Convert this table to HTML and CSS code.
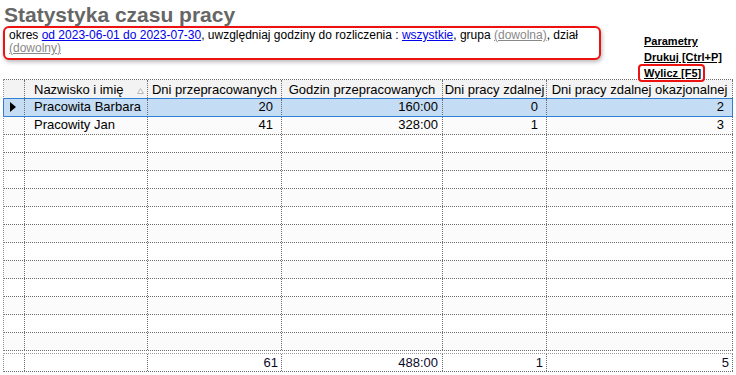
FILE: index.html
```html
<!DOCTYPE html>
<html lang="pl">
<head>
<meta charset="utf-8">
<title>Statystyka czasu pracy</title>
<link rel="stylesheet" href="styles.css">
</head>
<body>
<div class="page">
  <div class="top">
    <div class="left">
      <h1 class="title">Statystyka czasu pracy</h1>
      <div class="filter">okres <a class="link" href="#">od 2023-06-01 do 2023-07-30</a>, uwzględniaj godziny do rozliczenia : <a class="link" href="#">wszystkie</a>, grupa <a class="muted" href="#">(dowolna)</a>, dział <a class="muted" href="#">(dowolny)</a></div>
    </div>
    <div class="actions">
      <a class="action" href="#">Parametry</a>
      <a class="action" href="#">Drukuj [Ctrl+P]</a>
      <a class="action boxed" href="#">Wylicz [F5]</a>
    </div>
  </div>

  <div class="grid">
    <div class="row head">
      <div class="cell c-ind"></div>
      <div class="cell c-name name-head"><span>Nazwisko i imię</span><svg class="sort" width="7" height="6" viewBox="0 0 7 6"><polygon points="3.5,0.5 6.5,5.5 0.5,5.5" fill="#f4f4f4" stroke="#b8b8b8" stroke-width="1"/></svg></div>
      <div class="cell c-days">Dni przepracowanych</div>
      <div class="cell c-hours">Godzin przepracowanych</div>
      <div class="cell c-remote">Dni pracy zdalnej</div>
      <div class="cell c-occ">Dni pracy zdalnej okazjonalnej</div>
    </div>
    <div class="row body sel">
      <div class="cell c-ind"><svg class="ptr" width="6" height="10" viewBox="0 0 6 10"><polygon points="0,0 6,5 0,10" fill="#000"/></svg></div>
      <div class="cell c-name">Pracowita Barbara</div>
      <div class="cell c-days num">20</div>
      <div class="cell c-hours num hrs">160:00</div>
      <div class="cell c-remote num">0</div>
      <div class="cell c-occ num">2</div>
    </div>
    <div class="row body alt">
      <div class="cell c-ind"></div>
      <div class="cell c-name">Pracowity Jan</div>
      <div class="cell c-days num">41</div>
      <div class="cell c-hours num hrs">328:00</div>
      <div class="cell c-remote num">1</div>
      <div class="cell c-occ num">3</div>
    </div>
    <div class="row body"><div class="cell c-ind"></div><div class="cell c-name"></div><div class="cell c-days"></div><div class="cell c-hours"></div><div class="cell c-remote"></div><div class="cell c-occ"></div></div>
    <div class="row body alt"><div class="cell c-ind"></div><div class="cell c-name"></div><div class="cell c-days"></div><div class="cell c-hours"></div><div class="cell c-remote"></div><div class="cell c-occ"></div></div>
    <div class="row body"><div class="cell c-ind"></div><div class="cell c-name"></div><div class="cell c-days"></div><div class="cell c-hours"></div><div class="cell c-remote"></div><div class="cell c-occ"></div></div>
    <div class="row body alt"><div class="cell c-ind"></div><div class="cell c-name"></div><div class="cell c-days"></div><div class="cell c-hours"></div><div class="cell c-remote"></div><div class="cell c-occ"></div></div>
    <div class="row body"><div class="cell c-ind"></div><div class="cell c-name"></div><div class="cell c-days"></div><div class="cell c-hours"></div><div class="cell c-remote"></div><div class="cell c-occ"></div></div>
    <div class="row body alt"><div class="cell c-ind"></div><div class="cell c-name"></div><div class="cell c-days"></div><div class="cell c-hours"></div><div class="cell c-remote"></div><div class="cell c-occ"></div></div>
    <div class="row body"><div class="cell c-ind"></div><div class="cell c-name"></div><div class="cell c-days"></div><div class="cell c-hours"></div><div class="cell c-remote"></div><div class="cell c-occ"></div></div>
    <div class="row body alt"><div class="cell c-ind"></div><div class="cell c-name"></div><div class="cell c-days"></div><div class="cell c-hours"></div><div class="cell c-remote"></div><div class="cell c-occ"></div></div>
    <div class="row body"><div class="cell c-ind"></div><div class="cell c-name"></div><div class="cell c-days"></div><div class="cell c-hours"></div><div class="cell c-remote"></div><div class="cell c-occ"></div></div>
    <div class="row body alt"><div class="cell c-ind"></div><div class="cell c-name"></div><div class="cell c-days"></div><div class="cell c-hours"></div><div class="cell c-remote"></div><div class="cell c-occ"></div></div>
    <div class="row body"><div class="cell c-ind"></div><div class="cell c-name"></div><div class="cell c-days"></div><div class="cell c-hours"></div><div class="cell c-remote"></div><div class="cell c-occ"></div></div>
    <div class="row body alt"><div class="cell c-ind"></div><div class="cell c-name"></div><div class="cell c-days"></div><div class="cell c-hours"></div><div class="cell c-remote"></div><div class="cell c-occ"></div></div>
  </div>

  <div class="grid footer">
    <div class="row foot">
      <div class="cell c-ind"></div>
      <div class="cell c-name"></div>
      <div class="cell c-days num">61</div>
      <div class="cell c-hours num">488:00</div>
      <div class="cell c-remote num">1</div>
      <div class="cell c-occ num">5</div>
    </div>
  </div>
</div>
</body>
</html>
```

FILE: styles.css
```css
html, body {
  margin: 0;
  padding: 0;
  background: #ffffff;
}

body {
  font-family: "Liberation Sans", Arial, sans-serif;
  color: #000;
}

.page {
  padding-left: 3px;
}

.top {
  display: flex;
  height: 79px;
  position: relative;
  z-index: 2;
}

.left {
  width: 598px;
  flex: none;
}

.title {
  margin: 0;
  padding: 3px 0 0 1px;
  font-size: 21px;
  line-height: 23px;
  font-weight: bold;
  color: #666666;
}

.filter {
  box-sizing: border-box;
  width: 598px;
  border: 2px solid #ee1111;
  border-radius: 6px;
  padding: 1px 4px 3px 4px;
  font-size: 12px;
  line-height: 13px;
  color: #000;
  box-shadow: 1px 2px 4px rgba(0, 0, 0, 0.28);
  background: #fff;
}

.filter .link {
  color: #0000ee;
  text-decoration: underline;
}

.filter .muted {
  color: #888888;
  text-decoration: underline;
}

.actions {
  display: flex;
  flex-direction: column;
  align-items: flex-start;
  padding-left: 43px;
  padding-top: 33px;
}

.action {
  font-size: 11px;
  font-weight: bold;
  line-height: 16px;
  color: #000;
  text-decoration: underline;
}

.action.boxed {
  margin-top: -1px;
  margin-left: -6px;
  line-height: 14px;
  border: 2px solid #ee1111;
  border-radius: 4px;
  padding: 0 2px 0 4px;
  background: #fff;
}

/* grid */
.grid {
  box-sizing: border-box;
  width: 730px;
  border-left: 1px dotted #8a8a8a;
  border-top: 1px dotted #6e6e6e;
  font-size: 13px;
}

.row {
  display: flex;
  box-sizing: border-box;
  height: 18px;
  border-bottom: 1px dotted #6e6e6e;
  line-height: 16px;
}

.cell {
  box-sizing: border-box;
  flex: none;
  border-right: 1px dotted #6e6e6e;
  white-space: nowrap;
  overflow: hidden;
}

.c-ind { width: 21px; }
.c-name { width: 123px; padding-left: 9px; }
.c-days { width: 134px; }
.c-hours { width: 161px; }
.c-remote { width: 104px; }
.c-occ { width: 186px; }

.head {
  height: 19px;
  background: #f3f3f3;
}

.head .cell {
  padding-top: 2px;
  text-align: center;
}

.head .name-head {
  display: flex;
  align-items: flex-start;
  text-align: left;
}

.sort {
  margin-left: 13px;
  margin-top: 6px;
}

.body.alt {
  background: #fbfbfb;
}

.body .num {
  text-align: right;
  padding-right: 8px;
}

.body .num.hrs {
  padding-right: 4px;
}

.sel {
  position: relative;
  height: 19px;
  margin-top: -1px;
  border-bottom: none;
  padding-top: 1px;
  background: #c5ddf4;
}

.sel::after {
  content: "";
  position: absolute;
  left: -1px;
  right: 0;
  top: 0;
  bottom: 0;
  border: 1px solid #2f7fd6;
  pointer-events: none;
}

.ptr {
  display: block;
  margin: 3px 0 0 6px;
}

.footer {
  margin-top: 2px;
  border-top-color: #9a9a9a;
}

.foot .cell {
  padding-top: 1px;
  color: #0a0a28;
}

.foot .num {
  text-align: right;
  padding-right: 3px;
}

.foot .c-hours {
  padding-right: 4px;
}
```
